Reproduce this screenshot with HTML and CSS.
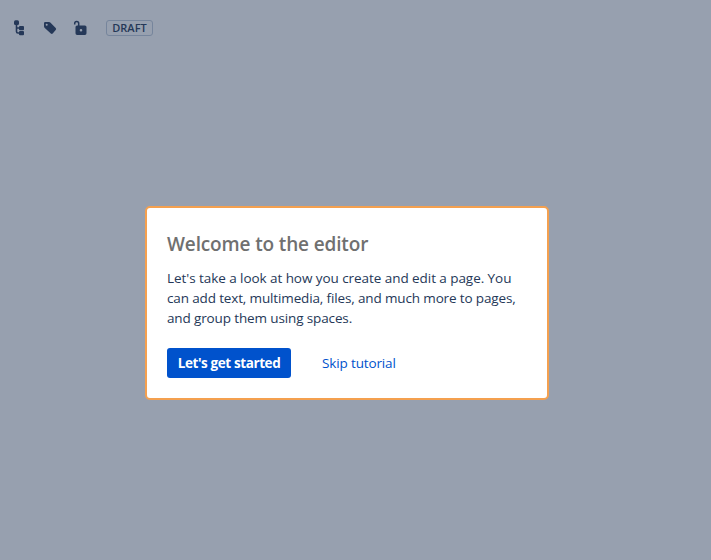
FILE: index.html
```html
<!DOCTYPE html>
<html lang="en">
<head>
<meta charset="utf-8">
<title>Editor</title>
<link rel="stylesheet" href="styles.css">
</head>
<body>
<header class="toolbar">
  <svg class="icon" width="16" height="18" viewBox="0 0 16 18">
    <rect x="3" y="1.200" width="5" height="4.800" rx="1.5"/>
    <path d="M5.500 5v7.500q0 1.500 1.500 1.500h3M5.500 9H9" fill="none" stroke="#253858" stroke-width="1.600"/>
    <rect x="8" y="7" width="5" height="4.200" rx="1"/>
    <rect x="8" y="12" width="5" height="4.300" rx="1"/>
  </svg>
  <svg class="icon" width="16" height="18" viewBox="0 0 16 18">
    <path fill-rule="evenodd" d="M3.200 3h3.800q.8 0 1.300.5l5.400 5.500q.9.900 0 1.900l-3 3.700q-.9.900-1.900 0L2.800 9Q2 8.200 2 7.200V4.300Q2 3 3.200 3ZM4.700 4.700a1 1 0 1 0 0 2a1 1 0 1 0 0-2Z"/>
  </svg>
  <svg class="icon" width="16" height="18" viewBox="0 0 16 18">
    <path d="M1.700 5.500V4.500Q1.700 2.500 3.700 2.500T5.700 4.500V8" fill="none" stroke="#253858" stroke-width="1.500"/>
    <path fill-rule="evenodd" d="M4.100 6.500h7.800q1.600 0 1.600 1.600v6.200q0 1.600-1.600 1.600H4.100q-1.600 0-1.600-1.600V8.100Q2.500 6.500 4.100 6.500ZM8 9.900a1.300 1.300 0 1 0 0 2.600a1.300 1.300 0 1 0 0-2.600Z"/>
  </svg>
  <span class="badge">DRAFT</span>
</header>
<main class="stage">
  <section class="dialog" role="dialog" aria-labelledby="title">
    <h1 class="title" id="title">Welcome to the editor</h1>
    <p class="text">
      <span class="line line-1">Let's take a look at how you create and edit a page. You</span>
      <span class="line line-2">can add text, multimedia, files, and much more to pages,</span>
      <span class="line line-3">and group them using spaces.</span>
    </p>
    <div class="actions">
      <button class="primary"><span>Let's get started</span></button>
      <a class="skip">Skip tutorial</a>
    </div>
  </section>
</main>
</body>
</html>
```
FILE: styles.css
```css
* { box-sizing: border-box; }
body {
  margin: 0;
  height: 560px;
  overflow: hidden;
  background: #97a0af;
  color: #253858;
  font-family: "Open Sans", "Noto Sans", sans-serif;
}
.toolbar {
  display: flex;
  align-items: center;
  gap: 15px;
  height: 56px;
  padding-left: 11px;
}
.icon { fill: #253858; flex: none; }
.badge {
  display: flex;
  align-items: center;
  justify-content: center;
  width: 47px;
  height: 16px;
  margin-left: 2px;
  border: 1px solid #76859c;
  border-radius: 3px;
  font-size: 11px;
  font-weight: 600;
  line-height: 14px;
}
.stage { padding: 150px 0 0 145px; }
.dialog {
  width: 404px;
  height: 194px;
  padding: 24px 20px 0;
  border: 2px solid #f4a04f;
  border-radius: 5px;
  background: #fff;
}
.title {
  margin: 0;
  color: #707070;
  font-size: 19px;
  font-weight: 600;
  line-height: 24px;
  letter-spacing: -0.14px;
  white-space: nowrap;
}
.text {
  margin: 12px 0 0;
  font-size: 13.5px;
  line-height: 20px;
}
.line { display: block; white-space: nowrap; width: max-content; }
.line-1 { letter-spacing: -0.06px; }
.line-2 { letter-spacing: -0.14px; }
.line-3 { letter-spacing: -0.13px; }
.actions {
  display: flex;
  align-items: center;
  margin-top: 20px;
}
.primary {
  display: flex;
  align-items: center;
  justify-content: center;
  width: 124px;
  height: 30px;
  padding: 0;
  border: 0;
  border-radius: 3px;
  background: #0052cc;
  color: #fff;
  font: 700 13.5px/20px "Open Sans", sans-serif;
  letter-spacing: -0.4px;
  white-space: nowrap;
}
.skip {
  margin-left: 31px;
  color: #0052cc;
  font-size: 13.5px;
  line-height: 20px;
  letter-spacing: -0.14px;
  white-space: nowrap;
}
```
